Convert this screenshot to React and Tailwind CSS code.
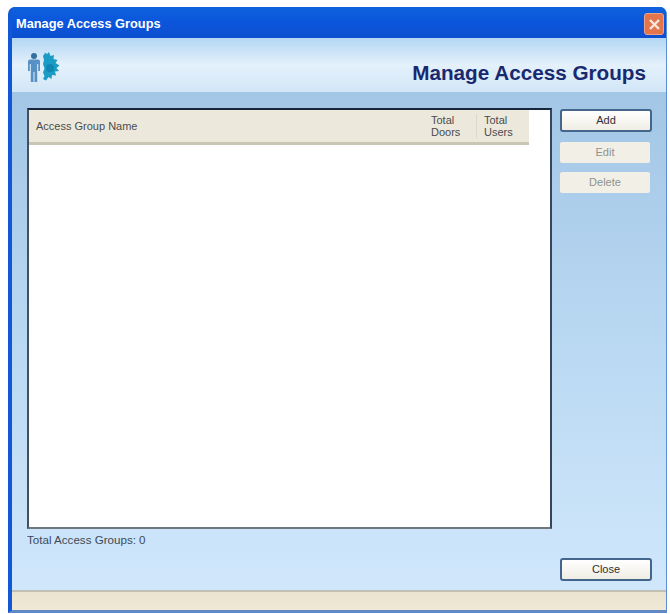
import React from "react";

const GroupIcon = () => (
  <svg width="34" height="34" viewBox="0 0 34 34">
    {/* person */}
    <circle cx="8" cy="5" r="3" fill="#35719f" />
    <path d="M2 10.500q0-2 2-2h8q2 0 2 2v9.500h-1.800v-7h-1V31H8.500V21h-1V31H4.800V13h-1v7H2z" fill="#5790c4" />
    {/* cog */}
    <path
      d="M18 1l3 2 2-2 1.500 4 3.500-1-.5 4 4 1-2 3 4 2.500-3 2.500 2.500 3-4 .5 1 4-4-.5-.5 4-3-2-2.500 3.500-3-1.500 1.500-3-1.500-3.500 1.500-4-1.500-4.500 1-4-1-4 2-3z"
      fill="#1a9cc4"
    />
    <circle cx="24" cy="17" r="4" fill="#0f86b4" />
  </svg>
);

const Button = ({ label, disabled }) => (
  <button
    className={
      disabled
        ? "w-[90px] h-[21px] text-[11px] text-[#8f9290] bg-[#f1efe6] rounded-[2px]"
        : "w-[92px] h-[23px] text-[11px] text-[#2e3034] bg-gradient-to-b from-[#ffffff] to-[#efede4] border-2 border-[#45668c] rounded-[3px]"
    }
  >
    {label}
  </button>
);

export default function App() {
  return (
    <div className="w-[670px] h-[614px] bg-white pt-[7px] pl-[8px] pr-[3px] overflow-hidden font-['Liberation_Sans',Arial,sans-serif]">
      <div className="h-[606px] flex flex-col rounded-t-[7px] overflow-hidden border-l-[4px] border-r border-b-[3px] border-[#1257d6] border-r-[#5a8fd6] border-b-[#5f88c4] bg-[#1257d6]">
        {/* Title bar */}
        <div className="h-[31px] -ml-[4px] -mr-px pl-[8px] pr-[3px] flex justify-between items-center bg-gradient-to-b from-[#0f62dc] via-[#0b55dc] to-[#0c4fd0]">
          <span className="text-white font-bold text-[12.800px] pt-[2px]">Manage Access Groups</span>
          <span className="w-[20px] h-[22px] mt-[3px] rounded-[3px] bg-[#e2754c] border border-[#eea283] flex items-center justify-center">
            <svg width="13" height="13" viewBox="0 0 13 13">
              <path d="M2 2l9 9M11 2l-9 9" stroke="#f7e6dc" strokeWidth="2.4" />
            </svg>
          </span>
        </div>

        {/* Header band */}
        <div className="h-[54px] flex justify-between bg-gradient-to-b from-[#b3d6f3] via-[#e4f1fb] to-[#d2e6f7] pl-[14px] pr-[20px]">
          <div className="pt-[13px]">
            <GroupIcon />
          </div>
          <div className="pt-[23px] text-[20.700px] leading-[24px] font-bold text-[#19296f]">Manage Access Groups</div>
        </div>

        {/* Body */}
        <div className="flex-1 flex flex-col bg-gradient-to-b from-[#a3c6e6] via-[#b9d8f2] to-[#d0e7fb] pl-[15px] pr-[14px] pt-[16px]">
          <div className="flex justify-between">
            <div className="w-[525px] h-[421px] bg-white border-2 border-t-[#16263c] border-l-[#43505e] border-r-[#33465e] border-b-[#6d7780]">
              <div className="w-[500px] h-[35px] flex items-center bg-[#ece9dc] border-b-[3px] border-[#c9c6b6] text-[11px] leading-[12px] text-[#4a4c4e]">
                <div className="flex-1 pl-[7px]">Access Group Name</div>
                <div className="w-[45px]">Total<br />Doors</div>
                <div className="w-[53px] pl-[7px] border-l border-[#dcd9cb]">Total<br />Users</div>
              </div>
            </div>
            <div className="flex flex-col gap-[9px] pt-[1px]">
              <div className="flex pb-px">
                <Button label="Add" />
              </div>
              <Button label="Edit" disabled />
              <Button label="Delete" disabled />
            </div>
          </div>
          <div className="flex justify-between flex-1">
            <div className="pt-[4px] text-[11.600px] leading-[14px] text-[#3d4a58]">Total Access Groups: 0</div>
            <div className="flex pt-[29px] items-start">
              <Button label="Close" />
            </div>
          </div>
        </div>

        {/* Status bar */}
        <div className="h-[20px] bg-gradient-to-b from-[#e9e3d0] to-[#f1e9d6] border-t-2 border-[#bfbfb4]"></div>
      </div>
    </div>
  );
}
